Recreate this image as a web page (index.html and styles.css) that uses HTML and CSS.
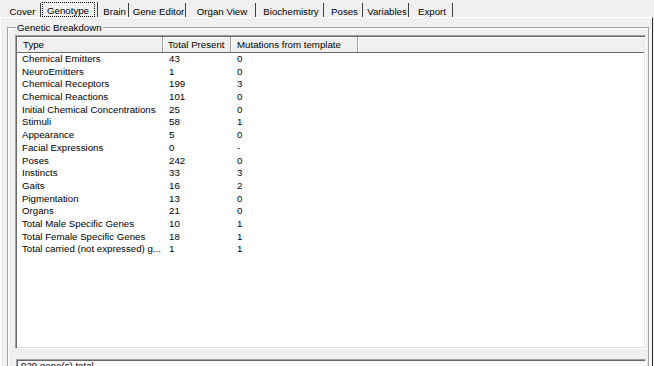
FILE: index.html
```html
<!DOCTYPE html>
<html>
<head>
<meta charset="utf-8">
<link rel="stylesheet" href="styles.css">
</head>
<body>
<div class="tabs">
  <div class="tab t1">Cover</div>
  <div class="tab t2 sel"><span class="focus">Genotype</span></div>
  <div class="tab t3">Brain</div>
  <div class="tab t4">Gene Editor</div>
  <div class="tab t5">Organ View</div>
  <div class="tab t6">Biochemistry</div>
  <div class="tab t7">Poses</div>
  <div class="tab t8">Variables</div>
  <div class="tab t9">Export</div>
</div>
<div class="page">
  <div class="group">
    <span class="legend">Genetic Breakdown</span>
    <div class="list">
      <div class="header">
        <div class="hcell c1">Type</div>
        <div class="hcell c2">Total Present</div>
        <div class="hcell c3">Mutations from template</div>
        <div class="hcell c4"></div>
      </div>
      <div class="rows">
        <div class="row"><span class="c1">Chemical Emitters</span><span class="c2">43</span><span class="c3">0</span></div>
        <div class="row"><span class="c1">NeuroEmitters</span><span class="c2">1</span><span class="c3">0</span></div>
        <div class="row"><span class="c1">Chemical Receptors</span><span class="c2">199</span><span class="c3">3</span></div>
        <div class="row"><span class="c1">Chemical Reactions</span><span class="c2">101</span><span class="c3">0</span></div>
        <div class="row"><span class="c1">Initial Chemical Concentrations</span><span class="c2">25</span><span class="c3">0</span></div>
        <div class="row"><span class="c1">Stimuli</span><span class="c2">58</span><span class="c3">1</span></div>
        <div class="row"><span class="c1">Appearance</span><span class="c2">5</span><span class="c3">0</span></div>
        <div class="row"><span class="c1">Facial Expressions</span><span class="c2">0</span><span class="c3">-</span></div>
        <div class="row"><span class="c1">Poses</span><span class="c2">242</span><span class="c3">0</span></div>
        <div class="row"><span class="c1">Instincts</span><span class="c2">33</span><span class="c3">3</span></div>
        <div class="row"><span class="c1">Gaits</span><span class="c2">16</span><span class="c3">2</span></div>
        <div class="row"><span class="c1">Pigmentation</span><span class="c2">13</span><span class="c3">0</span></div>
        <div class="row"><span class="c1">Organs</span><span class="c2">21</span><span class="c3">0</span></div>
        <div class="row"><span class="c1">Total Male Specific Genes</span><span class="c2">10</span><span class="c3">1</span></div>
        <div class="row"><span class="c1">Total Female Specific Genes</span><span class="c2">18</span><span class="c3">1</span></div>
        <div class="row"><span class="c1">Total carried (not expressed) g...</span><span class="c2">1</span><span class="c3">1</span></div>
      </div>
    </div>
    <div class="status">929 gene(s) total</div>
  </div>
</div>
</body>
</html>
```

FILE: styles.css
```css
* { box-sizing: border-box; }
html, body {
  margin: 0;
  padding: 0;
}
body {
  width: 654px;
  height: 366px;
  overflow: hidden;
  background: #f0f0f0;
  font-family: "Liberation Sans", Arial, sans-serif;
  font-size: 9.7px;
  color: #000;
}
.tabs {
  display: flex;
  height: 17px;
  padding-left: 2px;
}
.tab {
  margin-top: 3px;
  height: 14px;
  padding-top: 2.5px;
  padding-left: 3px;
  line-height: 12px;
  text-align: center;
  white-space: nowrap;
  border-right: 1px solid #404040;
}
.t1 { width: 39px; }
.t2 { width: 57px; }
.t3 { width: 31px; }
.t4 { width: 57px; }
.t5 { width: 70px; }
.t6 { width: 68px; }
.t7 { width: 39px; }
.t8 { width: 46px; }
.t9 { width: 44px; }
.tab.sel {
  margin-top: 2px;
  height: 15px;
  padding: 0 2px 0 1px;
}
.focus {
  display: block;
  height: 15px;
  border: 1px dotted #000;
  padding-top: 1.5px;
  padding-left: 4px;
  line-height: 12px;
  text-align: left;
}
.page {
  width: 653px;
  height: 349px;
  border-top: 1px solid #fff;
  border-left: 1px solid #fff;
  border-right: 1px solid #303030;
}
.group {
  position: relative;
  margin: 9px 3px 0 6px;
  height: 360px;
  border: 1px solid #a0a0a0;
  box-shadow: inset 1px 1px 0 #fff, 1px 1px 0 #fff;
  padding: 7px 2px 0 7px;
}
.legend {
  position: absolute;
  top: -6px;
  left: 8px;
  padding: 0 1px;
  background: #f0f0f0;
  line-height: 12px;
}
.list {
  height: 314px;
  background: #fff;
  border: 1px solid;
  border-color: #a0a0a0 #fff #fff #a0a0a0;
  box-shadow: inset 1px 1px 0 #696969, inset -1px -1px 0 #e3e3e3;
  padding: 1px;
}
.header {
  display: flex;
  height: 16px;
  background: #f0f0f0;
  border-bottom: 1px solid #696969;
}
.hcell {
  height: 15px;
  padding-top: 2px;
  line-height: 12px;
  white-space: nowrap;
  border-right: 1px solid #a0a0a0;
  box-shadow: inset 1px 1px 0 #fff;
}
.header .c1 { width: 146px; padding-left: 6px; }
.header .c2 { width: 68px; padding-left: 5px; }
.header .c3 { width: 127px; padding-left: 6px; }
.header .c4 { flex: 1; border-right: none; }
.row {
  display: flex;
  height: 12.7px;
  line-height: 12.7px;
  white-space: nowrap;
}
.row .c1 { width: 146px; padding-left: 5px; overflow: hidden; }
.row .c2 { width: 68px; padding-left: 6px; }
.row .c3 { width: 127px; padding-left: 6px; }
.status {
  margin: 10px 0 0 1px;
  height: 20px;
  background: #fafafa;
  border: 1px solid;
  border-color: #a0a0a0 #fff #fff #a0a0a0;
  box-shadow: inset 1px 1px 0 #696969;
  padding-left: 4px;
  line-height: 12px;
}
```
